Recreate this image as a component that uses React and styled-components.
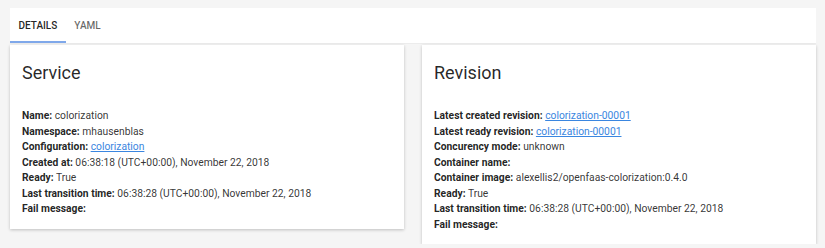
import React from "react";
import styled, { createGlobalStyle } from "styled-components";

const GlobalStyle = createGlobalStyle`
  body {
    margin: 0;
    background: #f5f5f5;
    font-family: Roboto, "Liberation Sans", Arial, sans-serif;
    color: rgba(0, 0, 0, 0.87);
  }
`;

const service = [
  { label: "Name", value: "colorization" },
  { label: "Namespace", value: "mhausenblas" },
  { label: "Configuration", value: "colorization", link: true },
  { label: "Created at", value: "06:38:18 (UTC+00:00), November 22, 2018" },
  { label: "Ready", value: "True" },
  { label: "Last transition time", value: "06:38:28 (UTC+00:00), November 22, 2018" },
  { label: "Fail message", value: "" },
];

const revision = [
  { label: "Latest created revision", value: "colorization-00001", link: true },
  { label: "Latest ready revision", value: "colorization-00001", link: true },
  { label: "Concurency mode", value: "unknown" },
  { label: "Container name", value: "" },
  { label: "Container image", value: "alexellis2/openfaas-colorization:0.4.0" },
  { label: "Ready", value: "True" },
  { label: "Last transition time", value: "06:38:28 (UTC+00:00), November 22, 2018" },
  { label: "Fail message", value: "" },
];

const InfoCard = ({ title, rows }) => (
  <Card>
    <Title>{title}</Title>
    <Rows>
      {rows.map((r) => (
        <Row key={r.label}>
          <b>{r.label}:</b> {r.link ? <Link href="#">{r.value}</Link> : r.value}
        </Row>
      ))}
    </Rows>
  </Card>
);

const App = () => {
  return (
    <Page>
      <GlobalStyle />
      <TabBar>
        <Tab active>Details</Tab>
        <Tab>Yaml</Tab>
      </TabBar>
      <Cards>
        <InfoCard title="Service" rows={service} />
        <InfoCard title="Revision" rows={revision} />
      </Cards>
    </Page>
  );
};

const Page = styled.div`
  padding: 8px 9px 0 10px;
`;

const TabBar = styled.div`
  display: flex;
  height: 35px;
  background: #fff;
  border-bottom: 1px solid #ececec;
`;

const Tab = styled.div`
  display: flex;
  align-items: center;
  justify-content: center;
  padding: 0 8.5px 0 8.5px;
  font-size: 10px;
  font-weight: 500;
  text-transform: uppercase;
  color: ${(p) => (p.active ? "rgba(0,0,0,0.87)" : "rgba(0,0,0,0.6)")};
  border-bottom: 2px solid ${(p) => (p.active ? "#7fa8ea" : "transparent")};
  padding-top: 2px;
`;

const Cards = styled.div`
  display: grid;
  grid-template-columns: 1fr 1fr;
  gap: 18px;
  align-items: start;
  margin-top: 1px;
`;

const Card = styled.div`
  background: #fff;
  padding: 16px 12px 12px 12px;
  box-shadow: 0 1px 3px rgba(0, 0, 0, 0.22);
`;

const Title = styled.div`
  font-size: 18px;
  line-height: 24px;
  margin-bottom: 23px;
  color: rgba(0, 0, 0, 0.85);
`;

const Rows = styled.div`
  display: flex;
  flex-direction: column;
`;

const Row = styled.div`
  font-size: 10.3px;
  line-height: 15.5px;
  color: rgba(0, 0, 0, 0.8);
  b {
    font-weight: 700;
    color: rgba(0, 0, 0, 0.87);
  }
`;

const Link = styled.a`
  color: #3a86e0;
  text-decoration: underline;
`;

export default App;
